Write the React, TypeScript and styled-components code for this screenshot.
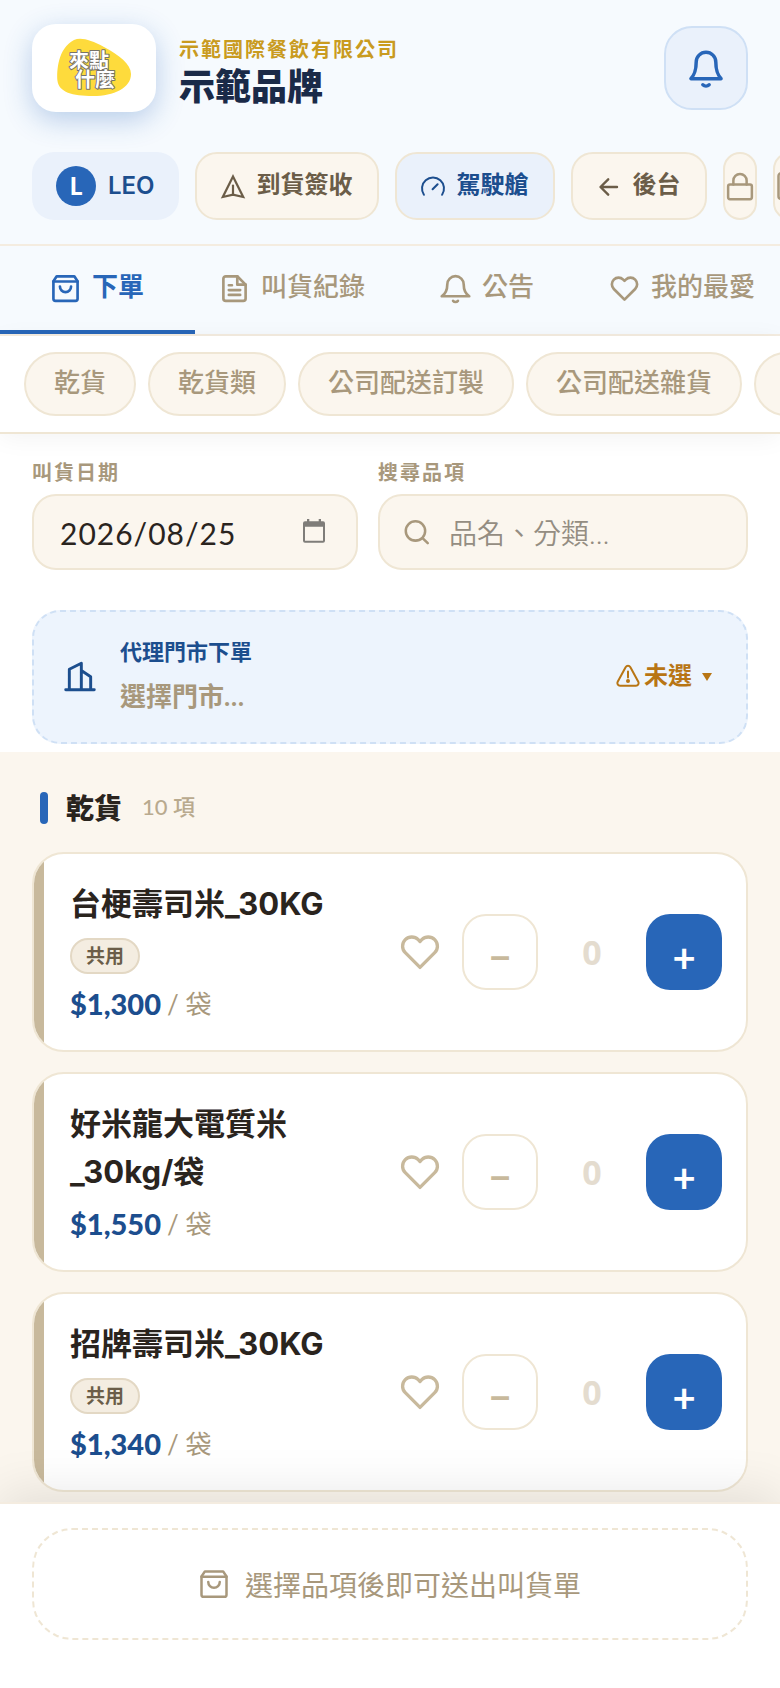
import React, { useState } from "react";
import styled, { createGlobalStyle, css } from "styled-components";

const c = {
  blue: "#2866b8",
  navy: "#1c4e8e",
  paleBlue: "#eaf1fb",
  skyLine: "#cfe0f5",
  header: "#f6fafe",
  headerLine: "#f4ece0",
  cream: "#fbf6ee",
  line: "#efe6d4",
  sand: "#c8b99c",
  taupe: "#a8987c",
  earth: "#6b5d48",
  ink: "#2a241e",
  amber: "#b87514",
};

const Global = createGlobalStyle`
  *, *::before, *::after { box-sizing: border-box; }
  body {
    margin: 0;
    background: ${c.cream};
    color: ${c.ink};
    font-family: Lato, "Noto Sans CJK TC", sans-serif;
  }
  button, input { font: inherit; color: inherit; margin: 0; }
  button { cursor: pointer; padding: 0; }
  h1, h2, h3, p { margin: 0; }
  svg { display: block; flex: none; overflow: visible; }
`;

/* ---------- icons ---------- */

type IconProps = { size: number; stroke?: number };

const Icon = ({ size, stroke = 2, children }: IconProps & { children: React.ReactNode }) => (
  <svg
    width={size}
    height={size}
    viewBox="0 0 24 24"
    fill="none"
    stroke="currentColor"
    strokeWidth={stroke}
    strokeLinecap="round"
    strokeLinejoin="round"
    aria-hidden="true"
  >
    {children}
  </svg>
);

const BellIcon = (p: IconProps) => (
  <Icon {...p}>
    <path d="M18.800 8.600a6.800 6.800 0 0 0-13.600 0C5.200 13.800 3 16.800.600 18.400h22.800C21 16.800 18.800 13.800 18.800 8.600" />
    <path d="M14 22.200a2.600 2.600 0 0 1-4 0" />
  </Icon>
);

const NarrowBellIcon = (p: IconProps) => (
  <Icon {...p}>
    <path d="M17.600 8.600a5.600 5.600 0 0 0-11.200 0c0 5.600-1.400 7.600-3 9.500h17.200c-1.600-1.900-3-3.900-3-9.500" />
    <path d="M13.800 21.600a2.600 2.600 0 0 1-3.600 0" />
  </Icon>
);

const BagIcon = (p: IconProps) => (
  <Icon {...p}>
    <path d="M4.700 1.900h14.600L22 6v14.500a1.700 1.700 0 0 1-1.700 1.700H3.700A1.700 1.700 0 0 1 2 20.500V6Z" />
    <path d="M2 6.200h20" />
    <path d="M16.600 10.400a4.600 4.600 0 0 1-9.200 0" />
  </Icon>
);

const DocIcon = (p: IconProps) => (
  <Icon {...p}>
    <path d="M14.300 1.900H4.800a2 2 0 0 0-2 2v16.300a2 2 0 0 0 2 2h14.400a2 2 0 0 0 2-2V8.800Z" />
    <path d="M14.300 1.900v6.900h6.900M7.300 9.300h2.600M7.300 13.300h9.400M7.300 17.300h9.400" />
  </Icon>
);

const HeartIcon = (p: IconProps) => (
  <Icon {...p}>
    <path d="M20.840 4.610a5.500 5.500 0 0 0-7.780 0L12 5.670l-1.060-1.060a5.500 5.500 0 0 0-7.780 7.780l1.060 1.060L12 21.230l7.780-7.780 1.060-1.060a5.500 5.500 0 0 0 0-7.780z" />
  </Icon>
);

const DeliveryIcon = (p: IconProps) => (
  <Icon {...p}>
    <path d="M12 2.500 1.800 23 12 20.600 22.200 23Z" strokeLinejoin="miter" />
    <path d="M12 11.500v9" />
  </Icon>
);

const GaugeIcon = (p: IconProps) => (
  <Icon {...p}>
    <path d="M2.900 20.800a11 11 0 1 1 18.200 0" />
    <path d="m11.600 15.300 5-5" />
  </Icon>
);

const BackIcon = (p: IconProps) => (
  <Icon {...p}>
    <path d="M20 13H4M11.200 5.300 3.500 13l7.700 7.700" />
  </Icon>
);

const LockIcon = (p: IconProps) => (
  <Icon {...p}>
    <rect x="2.500" y="10.800" width="19" height="11.700" rx="1.500" />
    <path d="M6.700 10.800V7.600a5.300 5.300 0 0 1 10.600 0v3.200" />
  </Icon>
);

const SearchIcon = (p: IconProps) => (
  <Icon {...p}>
    <circle cx="11" cy="10.500" r="9.300" />
    <path d="m17.800 17.300 5 5" />
  </Icon>
);

const BuildingIcon = (p: IconProps) => (
  <Icon {...p}>
    <path d="M1.300 21.500h21.400M4 21.500V6.200l9-4.500v19.800M13 7.200l7 4.600v9.700" />
  </Icon>
);

const AlertIcon = (p: IconProps) => (
  <Icon {...p}>
    <path d="M9.600 2.200a2.800 2.800 0 0 1 4.800 0l7.900 14.600a2.700 2.700 0 0 1-2.400 4H4.100a2.700 2.700 0 0 1-2.400-4ZM12 6.500v6" />
    <circle cx="12" cy="16" r="1" fill="currentColor" />
  </Icon>
);

const CalendarIcon = () => (
  <svg width="24" height="24" viewBox="0 0 24 24" fill="#7f7d79" aria-hidden="true">
    <path d="M20 1.300h-1V-1h-2.300v2.300H7.300V-1H5v2.300H3A2 2 0 0 0 1 3.300v17.400a2 2 0 0 0 2 2h18a2 2 0 0 0 2-2V3.300a2 2 0 0 0-2-2ZM21 20.700H3V6.800h18Z" />
  </svg>
);

const LogoMark = () => (
  <svg width="74" height="60" viewBox="0 0 74 60" role="img" aria-label="來點什麼">
    <path
      d="M17 2C24-1 34 2 47 9c15 8 27 17 27 27 0 14-17 22-38 22C15 58 2 54 .5 43-.5 33 1 10 17 2Z"
      fill="#fedb3c"
    />
    <g
      fontFamily='"Noto Sans CJK TC", sans-serif'
      fontWeight="700"
      fontSize="20"
      fill="#fff"
      stroke="#77736a"
      strokeWidth="2"
      strokeLinejoin="round"
      paintOrder="stroke"
    >
      <text x="12" y="30">來點</text>
      <text x="18" y="49">什麼</text>
    </g>
  </svg>
);

/* ---------- layout ---------- */

const Page = styled.div`
  min-height: 100vh;
  display: flex;
  flex-direction: column;
  overflow-x: clip;
`;

const Header = styled.header`
  background: ${c.header};
  border-bottom: 2px solid ${c.headerLine};
  padding: 24px 0;
  display: flex;
  flex-direction: column;
  gap: 40px;
`;

const BrandRow = styled.div`
  display: flex;
  align-items: center;
  padding: 0 32px;
`;

const LogoTile = styled.div`
  width: 124px;
  height: 88px;
  border-radius: 24px;
  background: #fff;
  display: grid;
  place-items: center;
  box-shadow: 0 8px 28px rgba(40, 102, 184, 0.3);
`;

const BrandText = styled.div`
  flex: 1;
  margin-left: 23px;
  padding-top: 8px;
`;

const Company = styled.p`
  font-size: 20px;
  line-height: 28px;
  font-weight: 700;
  letter-spacing: 2px;
  color: #c99b20;
`;

const Brand = styled.h1`
  font-size: 36px;
  line-height: 46px;
  font-weight: 900;
  color: #1a2a48;
`;

const BellButton = styled.button`
  width: 84px;
  height: 84px;
  border-radius: 28px;
  border: 2px solid ${c.skyLine};
  background: ${c.paleBlue};
  color: ${c.blue};
  display: grid;
  place-items: center;
`;

const scrollRow = css`
  display: flex;
  overflow-x: auto;
  scrollbar-width: none;
`;

const ChipRow = styled.div`
  ${scrollRow}
  gap: 16px;
  padding-left: 32px;
`;

const Chip = styled.button<{ $tone?: "user" | "blue"; $compact?: boolean }>`
  flex: none;
  height: 68px;
  display: flex;
  align-items: center;
  gap: 12px;
  padding: 0 ${(p) => (p.$compact ? 0 : 24)}px;
  border-radius: ${(p) => (p.$compact ? 17 : 22)}px;
  border: ${(p) => (p.$tone === "user" ? "0" : `2px solid ${c.line}`)};
  background: ${(p) => (p.$tone ? c.paleBlue : c.cream)};
  color: ${(p) => (p.$tone ? c.navy : p.$compact ? c.taupe : c.earth)};
  font-size: 24px;
  line-height: 32px;
  font-weight: 700;
`;

const ControlText = styled.span`
  padding-bottom: 4px;
`;

const UserName = styled.span`
  font-family: Inter, sans-serif;
  font-weight: 600;
`;

const Avatar = styled.span`
  width: 40px;
  height: 40px;
  border-radius: 50%;
  background: ${c.blue};
  color: #fff;
  font-size: 24px;
  line-height: 40px;
  font-weight: 900;
  text-align: center;
`;

const Tabs = styled.nav`
  display: flex;
  background: ${c.header};
  border-bottom: 2px solid ${c.headerLine};
`;

const Tab = styled.button<{ $active: boolean }>`
  flex: 1;
  height: 88px;
  display: flex;
  align-items: center;
  justify-content: center;
  gap: 12px;
  border: 0;
  border-bottom: 4px solid ${(p) => (p.$active ? c.blue : "transparent")};
  background: none;
  color: ${(p) => (p.$active ? c.blue : c.taupe)};
  font-size: 26px;
  line-height: 32px;
  font-weight: ${(p) => (p.$active ? 700 : 500)};
  white-space: nowrap;
`;

const Categories = styled.div`
  ${scrollRow}
  gap: 12px;
  padding: 16px 24px;
  background: #fff;
  border-bottom: 2px solid ${c.line};
`;

const CategoryShade = styled.div`
  position: relative;
  box-shadow: 0 4px 24px rgba(0, 0, 0, 0.05);
`;

const Pill = styled.button`
  flex: none;
  height: 64px;
  padding: 0 28px 4px;
  border: 2px solid ${c.line};
  border-radius: 32px;
  background: ${c.cream};
  color: ${c.taupe};
  font-size: 26px;
  line-height: 32px;
  font-weight: 500;
`;

const Panel = styled.section`
  background: #fff;
  padding: 24px 32px 8px;
`;

const Filters = styled.div`
  display: grid;
  grid-template-columns: 326fr 370fr;
  gap: 20px;
`;

const Field = styled.div`
  display: flex;
  flex-direction: column;
  gap: 8px;
  min-width: 0;
`;

const FieldLabel = styled.label`
  font-size: 20px;
  line-height: 28px;
  font-weight: 700;
  letter-spacing: 2px;
  color: ${c.taupe};
`;

const InputBox = styled.div<{ $date?: boolean }>`
  height: 76px;
  display: flex;
  align-items: center;
  gap: 20px;
  padding: 0 ${(p) => (p.$date ? "30px 0 26px" : "24px")};
  border: 2px solid ${c.line};
  border-radius: 24px;
  background: ${c.cream};
  color: ${c.taupe};
`;

const TextInput = styled.input<{ $date?: boolean }>`
  flex: 1;
  min-width: 0;
  padding: 2px 0 0;
  border: 0;
  outline: 0;
  background: none;
  color: ${c.ink};
  font-size: ${(p) => (p.$date ? 30 : 28)}px;
  line-height: 40px;
  letter-spacing: ${(p) => (p.$date ? "1px" : "normal")};
  &::placeholder {
    color: #948d82;
    font-weight: 350;
    opacity: 1;
  }
`;

const PlainButton = styled.button`
  border: 0;
  background: none;
  color: inherit;
`;

const ProxyBox = styled.button`
  width: 100%;
  height: 134px;
  margin-top: 40px;
  padding: 0 34px 0 30px;
  display: flex;
  align-items: center;
  border: 2px dashed ${c.skyLine};
  border-radius: 28px;
  background: #edf4fd;
  color: ${c.navy};
  text-align: left;
`;

const ProxyText = styled.span`
  flex: 1;
  margin-left: 24px;
  padding-bottom: 2px;
  display: flex;
  flex-direction: column;
  gap: 8px;
  font-weight: 700;
`;

const ProxyTitle = styled.span`
  font-size: 22px;
  line-height: 32px;
`;

const ProxyValue = styled.span`
  font-size: 26px;
  line-height: 40px;
  color: ${c.taupe};
`;

const ProxyState = styled.span`
  display: flex;
  align-items: center;
  gap: 4px;
  color: ${c.amber};
  font-size: 24px;
  line-height: 32px;
  font-weight: 700;
`;

const Caret = styled.span`
  margin-left: 6px;
  border: 5px solid transparent;
  border-top: 8px solid currentColor;
  border-bottom: 0;
`;

const List = styled.main`
  flex: 1;
  padding: 32px 32px 8px;
`;

const GroupHead = styled.div`
  display: flex;
  align-items: center;
  height: 48px;
  margin-bottom: 20px;
  padding-left: 8px;
`;

const GroupBar = styled.span`
  width: 8px;
  height: 32px;
  border-radius: 4px;
  background: ${c.blue};
`;

const GroupTitle = styled.h2`
  margin-left: 18px;
  font-size: 28px;
  line-height: 40px;
  font-weight: 900;
`;

const GroupCount = styled.span`
  margin-left: 20px;
  padding-bottom: 2px;
  font-size: 22px;
  line-height: 40px;
  font-weight: 500;
  color: #b9aa8e;
`;

const Cards = styled.div`
  display: flex;
  flex-direction: column;
  gap: 20px;
`;

const Card = styled.article`
  display: flex;
  overflow: hidden;
  border: 2px solid ${c.line};
  border-radius: 32px;
  background: #fff;
`;

const Stripe = styled.span`
  flex: none;
  width: 10px;
  background: ${c.sand};
`;

const CardBody = styled.div`
  flex: 1;
  min-width: 0;
  display: flex;
  align-items: center;
  gap: 12px;
  padding: 26px 24px 26px 26px;
`;

const Info = styled.div`
  flex: 1;
  min-width: 0;
`;

const Name = styled.h3`
  max-width: 300px;
  font-family: Inter, "Noto Sans CJK TC", sans-serif;
  font-size: 31px;
  line-height: 48px;
  font-weight: 700;
`;

const Tag = styled.span`
  display: block;
  width: fit-content;
  height: 36px;
  margin: 10px 0;
  padding: 0 14px;
  border: 2px solid #e3d8c4;
  border-radius: 18px;
  background: #f4ede1;
  color: ${c.earth};
  font-size: 19px;
  line-height: 32px;
  font-weight: 700;
`;

const Price = styled.p`
  display: flex;
  align-items: center;
  gap: 6px;
  height: 40px;
  margin-top: 8px;
  font-size: 29px;
  line-height: 40px;
  font-weight: 900;
  color: ${c.navy};
`;

const Unit = styled.span`
  font-size: 26px;
  font-weight: 400;
  color: ${c.taupe};
`;

const HeartButton = styled(PlainButton)`
  width: 60px;
  height: 60px;
  display: grid;
  place-items: center;
  color: ${c.sand};
`;

const Stepper = styled.div`
  display: flex;
  align-items: center;
`;

const StepButton = styled.button<{ $primary?: boolean }>`
  width: 76px;
  height: 76px;
  border: ${(p) => (p.$primary ? "0" : `2px solid ${c.line}`)};
  border-radius: 24px;
  background: ${(p) => (p.$primary ? c.blue : "#fff")};
  color: ${(p) => (p.$primary ? "#fff" : c.sand)};
  font-family: Lato, sans-serif;
  font-size: 40px;
  line-height: 40px;
  font-weight: 700;
  padding-top: 10px;
`;

const Quantity = styled.output`
  width: 108px;
  text-align: center;
  font-family: "Noto Sans", sans-serif;
  font-size: 34px;
  line-height: 48px;
  font-weight: 700;
  color: #e4dccf;
`;

const Footer = styled.footer`
  position: sticky;
  bottom: 0;
  padding: 24px 32px 48px;
  background: #fff;
  border-top: 2px solid ${c.headerLine};
  box-shadow: 0 -8px 48px rgba(0, 0, 0, 0.1);
`;

const SubmitButton = styled.button`
  width: 100%;
  height: 112px;
  display: flex;
  align-items: center;
  justify-content: center;
  gap: 16px;
  border: 2px dashed ${c.line};
  border-radius: 40px;
  background: #fff;
  color: ${c.taupe};
  font-size: 28px;
  font-weight: 400;
`;

/* ---------- data ---------- */

const tabs = [
  { label: "下單", Glyph: BagIcon },
  { label: "叫貨紀錄", Glyph: DocIcon },
  { label: "公告", Glyph: BellIcon },
  { label: "我的最愛", Glyph: HeartIcon },
];

const categories = ["乾貨", "乾貨類", "公司配送訂製", "公司配送雜貨", "冷凍"];

const products = [
  { name: "台梗壽司米_30KG", shared: true, price: "$1,300" },
  { name: "好米龍大電質米_30kg/袋", shared: false, price: "$1,550" },
  { name: "招牌壽司米_30KG", shared: true, price: "$1,340" },
];

const ProductCard = ({ name, shared, price }: (typeof products)[number]) => {
  const [count, setCount] = useState(0);
  return (
    <Card>
      <Stripe />
      <CardBody>
        <Info>
          <Name>{name}</Name>
          {shared && <Tag>共用</Tag>}
          <Price>
            {price}
            <Unit>/ 袋</Unit>
          </Price>
        </Info>
        <HeartButton aria-label="加入最愛">
          <HeartIcon size={40} />
        </HeartButton>
        <Stepper>
          <StepButton aria-label="減少" onClick={() => setCount(Math.max(0, count - 1))}>
            −
          </StepButton>
          <Quantity>{count}</Quantity>
          <StepButton $primary aria-label="增加" onClick={() => setCount(count + 1)}>
            +
          </StepButton>
        </Stepper>
      </CardBody>
    </Card>
  );
};

export default function App() {
  const [active, setActive] = useState(0);
  const [date, setDate] = useState("2026/08/25");
  return (
    <Page lang="zh-Hant">
      <Global />
      <Header>
        <BrandRow>
          <LogoTile>
            <LogoMark />
          </LogoTile>
          <BrandText>
            <Company>示範國際餐飲有限公司</Company>
            <Brand>示範品牌</Brand>
          </BrandText>
          <BellButton aria-label="通知">
            <NarrowBellIcon size={42} />
          </BellButton>
        </BrandRow>
        <ChipRow>
          <Chip $tone="user">
            <Avatar>L</Avatar>
            <UserName>LEO</UserName>
          </Chip>
          <Chip>
            <DeliveryIcon size={24} stroke={2.2} />
            <ControlText>到貨簽收</ControlText>
          </Chip>
          <Chip $tone="blue">
            <GaugeIcon size={24} />
            <ControlText>駕駛艙</ControlText>
          </Chip>
          <Chip>
            <BackIcon size={24} stroke={2.4} />
            <ControlText>後台</ControlText>
          </Chip>
          <Chip $compact aria-label="鎖定">
            <LockIcon size={30} />
          </Chip>
          <Chip $compact aria-label="登出">
            <DocIcon size={30} />
          </Chip>
        </ChipRow>
      </Header>

      <Tabs>
        {tabs.map(({ label, Glyph }, i) => (
          <Tab key={label} $active={i === active} onClick={() => setActive(i)}>
            <Glyph size={29} stroke={2.2} />
            <ControlText>{label}</ControlText>
          </Tab>
        ))}
      </Tabs>

      <CategoryShade>
        <Categories>
          {categories.map((name) => (
            <Pill key={name}>{name}</Pill>
          ))}
        </Categories>
      </CategoryShade>

      <Panel>
        <Filters>
          <Field>
            <FieldLabel htmlFor="order-date">叫貨日期</FieldLabel>
            <InputBox $date>
              <TextInput id="order-date" $date value={date} onChange={(e) => setDate(e.target.value)} />
              <PlainButton aria-label="選擇日期">
                <CalendarIcon />
              </PlainButton>
            </InputBox>
          </Field>
          <Field>
            <FieldLabel htmlFor="item-search">搜尋品項</FieldLabel>
            <InputBox>
              <SearchIcon size={25} stroke={2.4} />
              <TextInput id="item-search" placeholder="品名、分類…" />
            </InputBox>
          </Field>
        </Filters>
        <ProxyBox>
          <BuildingIcon size={32} stroke={2.2} />
          <ProxyText>
            <ProxyTitle>代理門市下單</ProxyTitle>
            <ProxyValue>選擇門市…</ProxyValue>
          </ProxyText>
          <ProxyState>
            <AlertIcon size={24} />
            <ControlText>未選</ControlText>
            <Caret />
          </ProxyState>
        </ProxyBox>
      </Panel>

      <List>
        <GroupHead>
          <GroupBar />
          <GroupTitle>乾貨</GroupTitle>
          <GroupCount>10 項</GroupCount>
        </GroupHead>
        <Cards>
          {products.map((p) => (
            <ProductCard key={p.name} {...p} />
          ))}
        </Cards>
      </List>

      <Footer>
        <SubmitButton>
          <BagIcon size={30} />
          選擇品項後即可送出叫貨單
        </SubmitButton>
      </Footer>
    </Page>
  );
}
